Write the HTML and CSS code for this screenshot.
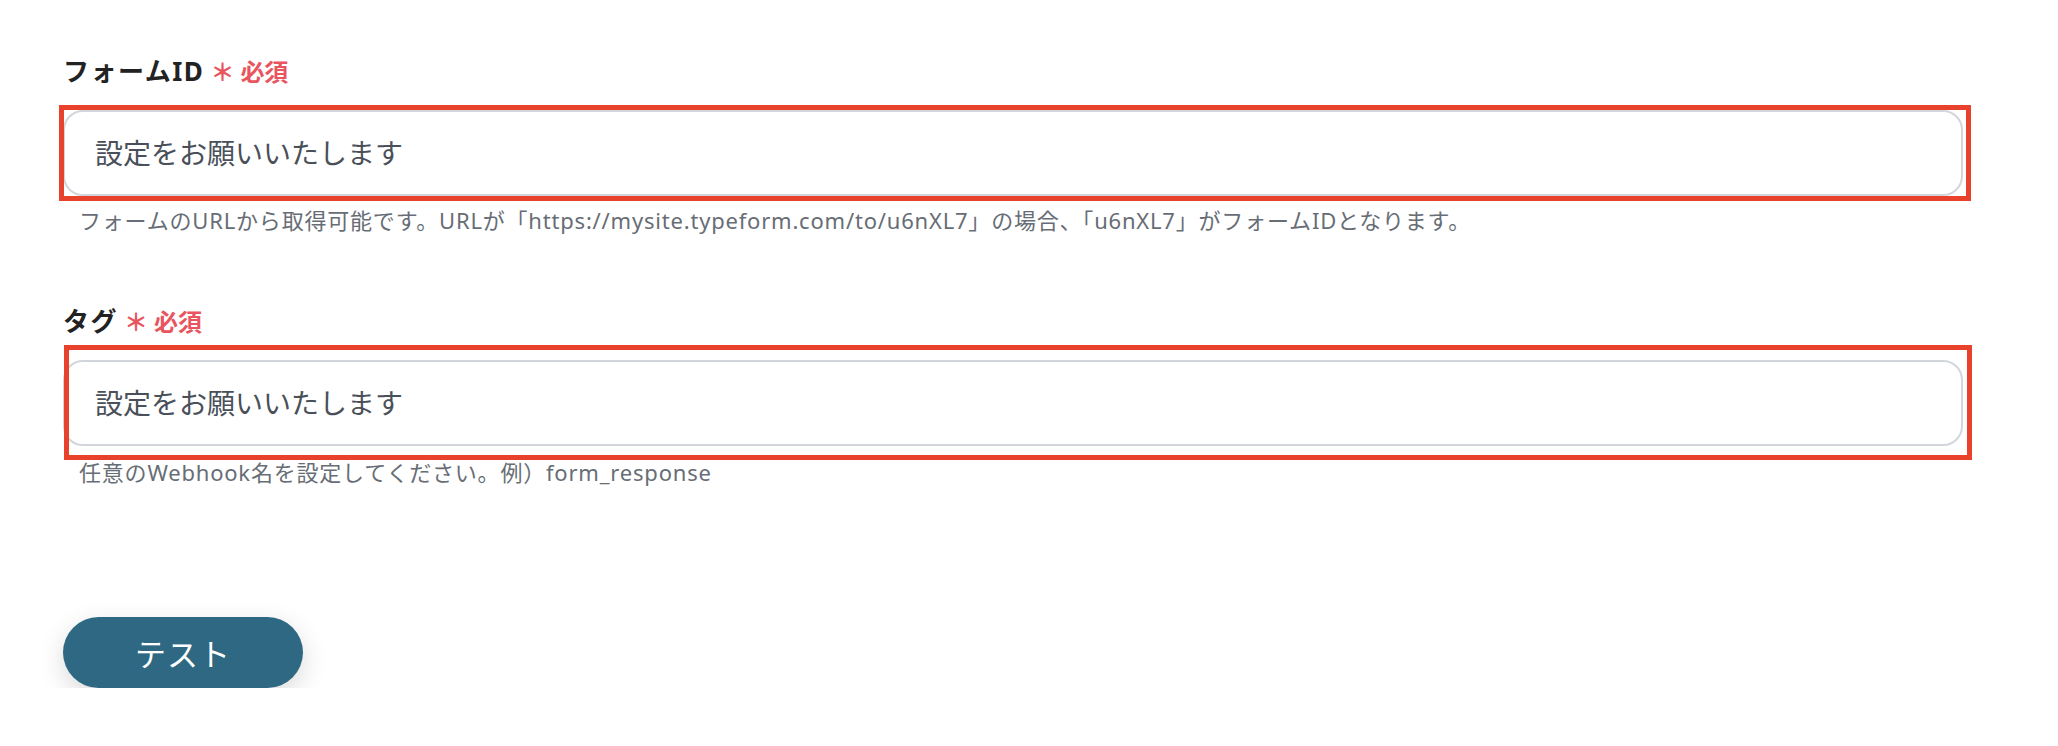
FILE: index.html
```html
<!DOCTYPE html>
<html lang="ja">
<head>
<meta charset="utf-8">
<title>Typeform 設定</title>
<link rel="stylesheet" href="styles.css">
</head>
<body>
<main class="form">
  <section class="field field-first">
    <div class="label">フォームID<span class="req"><span class="star">＊</span>必須</span></div>
    <div class="control">
      <input class="input" type="text" placeholder="設定をお願いいたします">
      <div class="highlight highlight-a"></div>
    </div>
    <p class="help">フォームのURLから取得可能です。URLが「https://mysite.typeform.com/to/u6nXL7」の場合、「u6nXL7」がフォームIDとなります。</p>
  </section>
  <section class="field field-second">
    <div class="label">タグ<span class="req"><span class="star">＊</span>必須</span></div>
    <div class="control">
      <input class="input" type="text" placeholder="設定をお願いいたします">
      <div class="highlight highlight-b"></div>
    </div>
    <p class="help">任意のWebhook名を設定してください。例）form_response</p>
  </section>
  <button class="btn" type="button">テスト</button>
</main>
</body>
</html>
```
FILE: styles.css
```css
* { box-sizing: border-box; }
html, body {
  margin: 0;
  padding: 0;
  background: #ffffff;
}
body {
  font-family: "Noto Sans CJK JP", "Noto Sans", sans-serif;
  color: #222222;
}
.form {
  display: flex;
  flex-direction: column;
  align-items: flex-start;
  padding: 53px 0 0 63px;
  width: 1963px;
}
.field {
  width: 1900px;
  display: flex;
  flex-direction: column;
}
.field-second {
  margin-top: 69px;
}
.label {
  font-family: "Noto Sans", "Noto Sans CJK JP", sans-serif;
  font-size: 26px;
  font-weight: 700;
  letter-spacing: 1.5px;
  line-height: 36px;
  height: 36px;
  color: #222222;
  margin-bottom: 21px;
  display: flex;
  align-items: center;
}
.req {
  font-family: "Noto Sans CJK JP", sans-serif;
  color: #e8555e;
  font-size: 24px;
  font-weight: 700;
  letter-spacing: 0;
  margin-left: 6px;
  display: inline-flex;
  align-items: center;
}
.star {
  margin-right: 6px;
}
.control {
  position: relative;
  width: 1900px;
}
.input {
  display: block;
  width: 1900px;
  height: 86px;
  border: 2px solid #d2d6db;
  border-radius: 20px;
  background: #ffffff;
  padding: 0 30px 3px;
  font-family: "Noto Sans CJK JP", "Noto Sans", sans-serif;
  font-size: 28px;
  color: #464c55;
  outline: none;
}
.input::placeholder {
  color: #4a5059;
  opacity: 1;
}
.highlight {
  position: absolute;
  border: 5px solid #e8412c;
  pointer-events: none;
}
.highlight-a {
  left: -4px;
  top: -5px;
  width: 1912px;
  height: 96px;
}
.highlight-b {
  left: 1px;
  top: -15px;
  width: 1908px;
  height: 115px;
}
.help {
  font-family: "Noto Sans", "Noto Sans CJK JP", sans-serif;
  margin: 10px 0 0 16px;
  font-size: 22px;
  letter-spacing: 0.8px;
  line-height: 28px;
  color: #676d75;
}
.field-second .help {
  margin-top: 12px;
}
.btn {
  margin-top: 131px;
  width: 240px;
  height: 71px;
  border: none;
  border-radius: 36px;
  background: #2f6882;
  color: #ffffff;
  font-family: "Noto Sans CJK JP", "Noto Sans", sans-serif;
  font-size: 31px;
  font-weight: 400;
  letter-spacing: 1px;
  box-shadow: 0 8px 26px rgba(0, 0, 0, 0.15);
  cursor: pointer;
}
```
